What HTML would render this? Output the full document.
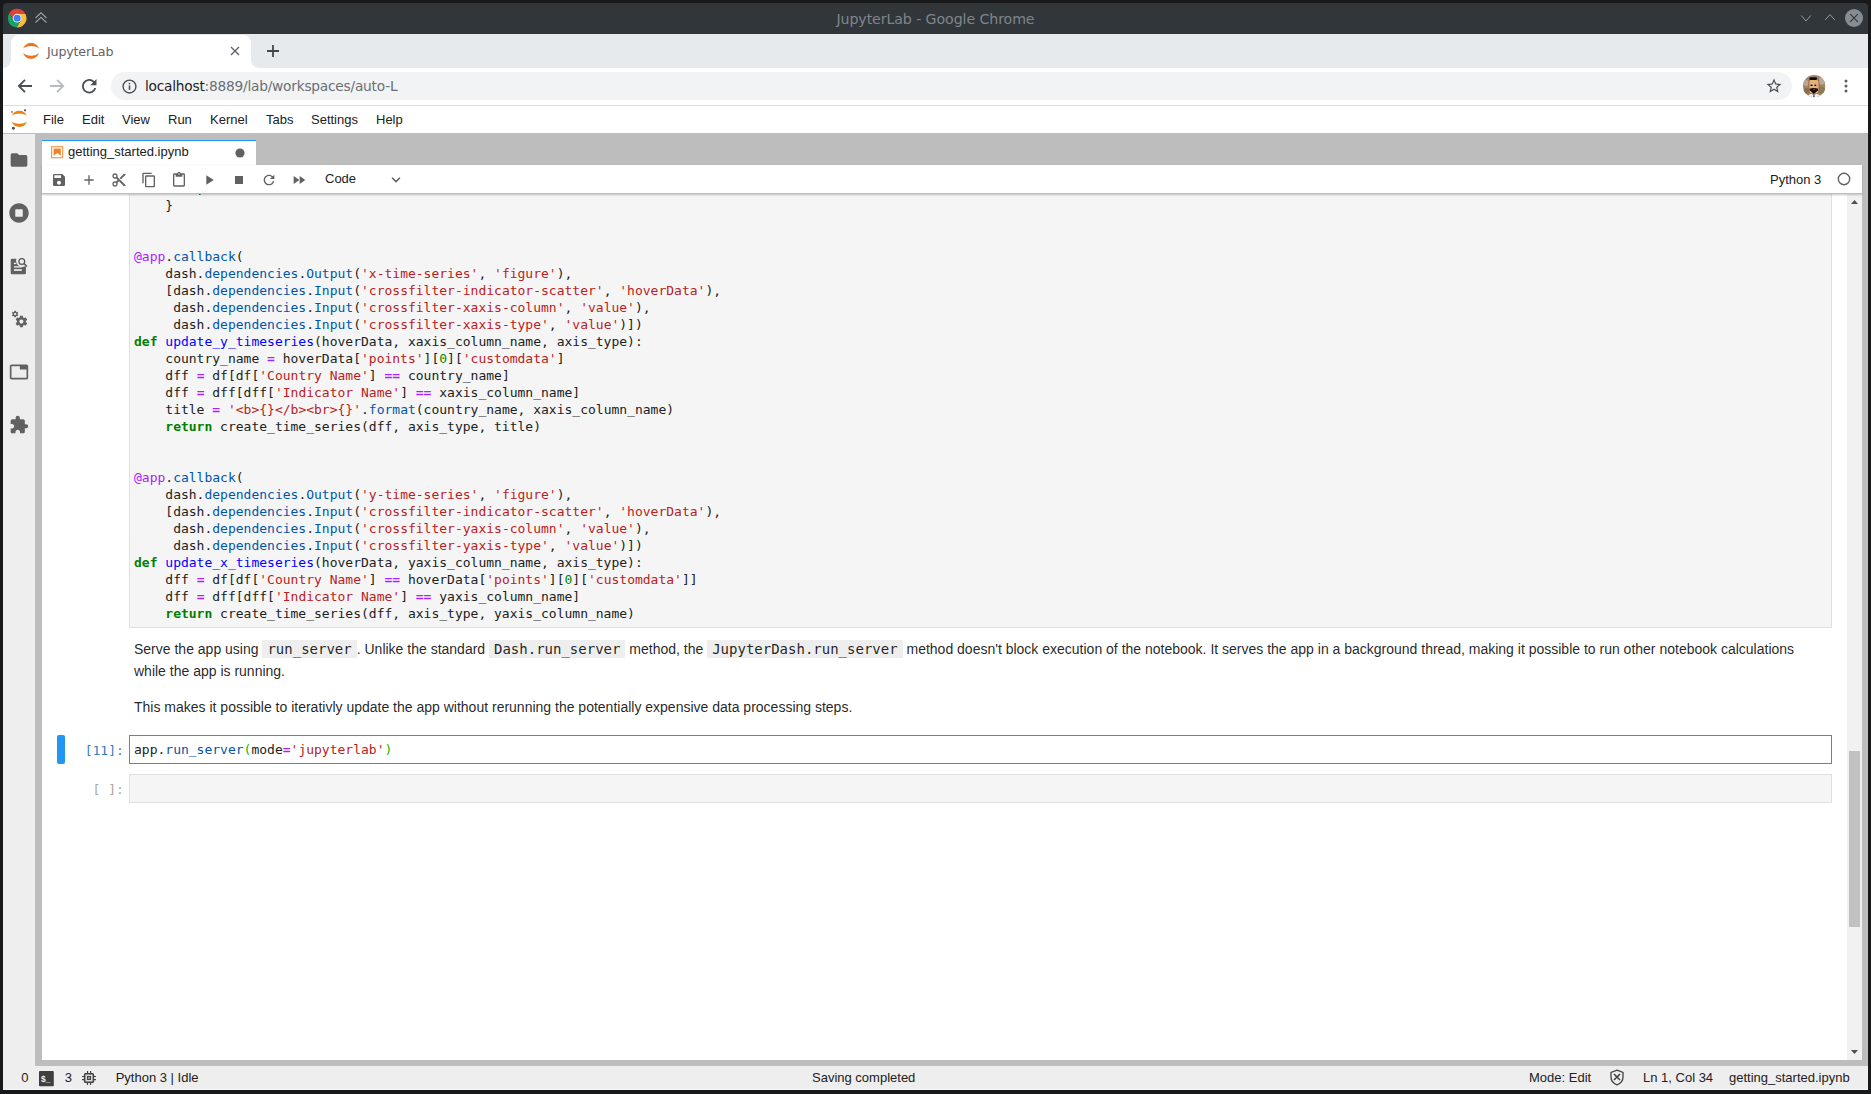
<!DOCTYPE html>
<html><head><meta charset="utf-8"><title>JupyterLab</title>
<style>
*{box-sizing:border-box}
html,body{margin:0;padding:0}
body{width:1871px;height:1094px;overflow:hidden;position:relative;background:#17191b;font-family:"Liberation Sans",Arial,sans-serif;}
.abs{position:absolute}
#titlebar{left:3px;top:3px;width:1865px;height:31px;background:#31363b;border-radius:4px 4px 0 0}
#title{left:0;width:1871px;top:9.500px;text-align:center;color:#80858a;font-family:"DejaVu Sans",sans-serif;font-size:14.200px;line-height:18px;letter-spacing:-0.1px}
#tabstrip{left:3px;top:34px;width:1865px;height:34px;background:#e7eaed}
#ctab{left:11px;top:35px;width:240px;height:33px;background:#fff;border-radius:8px 8px 0 0}
#ctabtxt{left:47px;top:42.500px;font-family:"DejaVu Sans",sans-serif;font-size:12.700px;line-height:18px;color:#5f6368;letter-spacing:-0.2px}
#navbar{left:3px;top:68px;width:1865px;height:38px;background:#fff;border-bottom:1px solid #dcdee1}
#omni{left:111px;top:72px;width:1681px;height:28px;border-radius:14px;background:#f1f3f4}
#url{left:145px;top:75.500px;font-family:"DejaVu Sans",sans-serif;font-size:13.730px;line-height:20px;color:#6b6f73;letter-spacing:-0.22px;white-space:nowrap}
#url b{font-weight:normal;color:#202124}
#menubar{left:3px;top:106px;width:1865px;height:28px;background:#fff;border-bottom:1px solid #bdbdbd}
.mi{top:112px;font-size:13px;line-height:16px;color:#212121;white-space:nowrap}
#sidebar{left:3px;top:134px;width:32px;height:932px;background:#eeeeee;border-right:0}
#dock{left:35px;top:134px;width:1833px;height:932px;background:#bdbdbd}
#jtab{left:42px;top:140px;width:214px;height:25px;background:#fff;border-top:1px solid #2196f3;}
#jtabtxt{left:68px;top:144px;font-size:13px;line-height:16px;color:#212121;white-space:nowrap}
#toolbar{left:42px;top:165px;width:1820px;height:29px;background:#fff;border-bottom:1px solid #bdbdbd;box-shadow:0 1px 2px 0 rgba(0,0,0,.22);z-index:5}
#nb{left:42px;top:193px;width:1820px;height:867px;background:#fff;overflow:hidden}
#statusbar{left:3px;top:1066px;width:1865px;height:24px;background:#eeeeee}
.st{top:1070px;font-size:13px;line-height:16px;color:#212121;white-space:nowrap}
.code{font-family:"DejaVu Sans Mono","Liberation Mono",monospace;font-size:13px;line-height:17px;white-space:pre;color:#212121}
.k{color:#008000;font-weight:bold}.d{color:#0000ff}.p{color:#0055aa}.s{color:#ba2121}.n{color:#008800}.o{color:#aa22ff;font-weight:bold}.m{color:#aa22ff}.br{color:#00bb00}
.md{font-size:14px;line-height:22px;color:rgba(0,0,0,.87);white-space:nowrap}
.md code{font-family:"DejaVu Sans Mono","Liberation Mono",monospace;font-size:14px;background:#eeeeee;padding:1px 5px;}
svg{position:absolute;overflow:visible}
</style></head><body>
<!-- ===== window title bar ===== -->
<div id="titlebar" class="abs"></div>
<div id="title" class="abs">JupyterLab - Google Chrome</div>
<svg style="left:6.950px;top:7.900px" width="20.300" height="20.300" viewBox="0 0 48 48">
 <path d="M24 14 L43.600 14 A22 22 0 0 0 5.540 12.030 L15.340 29 L24 24Z" fill="#db4437"/>
 <path d="M24 14 L43.600 14 A22 22 0 0 1 22.860 45.970 L32.660 29 L24 24Z" fill="#fbbc3a"/>
 <path d="M32.660 29 L22.860 45.970 A22 22 0 0 1 5.540 12.030 L15.340 29 L24 24Z" fill="#1aa260"/>
 <circle cx="24" cy="24" r="10.300" fill="#f1f1f1"/>
 <circle cx="24" cy="24" r="8.200" fill="#3d7ff5"/>
</svg>
<svg style="left:34px;top:10.700px" width="14" height="14" viewBox="0 0 14 14" fill="none" stroke="#9da1a5" stroke-width="1.1">
 <path d="M1.500 7 L7 1.800 L12.500 7"/><path d="M1.500 11.500 L7 6.300 L12.500 11.500"/>
</svg>
<svg style="left:1799px;top:13px" width="14" height="10" viewBox="0 0 14 10" fill="none" stroke="#979ba0" stroke-width="1"><path d="M2.100 2.400 L7 8 L11.900 2.400"/></svg>
<svg style="left:1823px;top:12px" width="14" height="10" viewBox="0 0 14 10" fill="none" stroke="#979ba0" stroke-width="1"><path d="M2.100 8 L7 2.600 L11.900 8"/></svg>
<svg style="left:1845px;top:9px" width="18" height="18" viewBox="0 0 18 18"><circle cx="9" cy="9" r="9" fill="#868c91"/><path d="M5.200 5.200 L12.800 12.800 M12.800 5.200 L5.200 12.800" stroke="#31363b" stroke-width="1.100" fill="none"/></svg>
<!-- ===== chrome tab strip ===== -->
<div id="tabstrip" class="abs"></div>
<div id="ctab" class="abs"></div>
<svg style="left:3px;top:60px" width="8" height="8" viewBox="0 0 8 8"><path d="M8 8 H0 A8 8 0 0 0 8 0 Z" fill="#fff"/></svg>
<svg style="left:251px;top:60px" width="8" height="8" viewBox="0 0 8 8"><path d="M0 8 H8 A8 8 0 0 1 0 0 Z" fill="#fff"/></svg>
<svg style="left:22px;top:42px" width="18" height="18" viewBox="0 0 18 18"><path d="M1.200 6.500 C3.400 -0.970 14.700 -0.970 16.900 6.500 C14 3.030 4.100 3.030 1.200 6.500 Z" fill="#e8751f"/><path d="M1.200 10.750 C3.400 18.800 14.700 18.800 16.900 10.750 C14 14.800 4.100 14.800 1.200 10.750 Z" fill="#e8751f"/></svg>
<div id="ctabtxt" class="abs">JupyterLab</div>
<svg style="left:230px;top:46px" width="10" height="10" viewBox="0 0 10 10" fill="none" stroke="#5f6368" stroke-width="1.400"><path d="M1 1 L9 9 M9 1 L1 9"/></svg>
<svg style="left:266px;top:44px" width="14" height="14" viewBox="0 0 14 14" fill="none" stroke="#44474a" stroke-width="1.800"><path d="M7 1 V13 M1 7 H13"/></svg>
<!-- ===== chrome nav bar ===== -->
<div id="navbar" class="abs"></div>
<div id="omni" class="abs"></div>
<svg style="left:17px;top:78px" width="16" height="16" viewBox="0 0 16 16" fill="none" stroke="#4b4e52" stroke-width="1.800"><path d="M15 8 H2 M8 1.800 L1.800 8 L8 14.200"/></svg>
<svg style="left:49px;top:78px" width="16" height="16" viewBox="0 0 16 16" fill="none" stroke="#b9bcbf" stroke-width="1.800"><path d="M1 8 H14 M8 1.800 L14.200 8 L8 14.200"/></svg>
<svg style="left:81.900px;top:79px" width="14.500" height="14.500" viewBox="0 0 16 16"><path d="M13.650 2.350 A8 8 0 1 0 15.730 10 H13.650 A6 6 0 1 1 12.230 3.770 L9 7 H16 V0 Z" fill="#4b4e52"/></svg>
<svg style="left:121.600px;top:78.800px" width="15" height="15" viewBox="0 0 14 14"><circle cx="7" cy="7" r="6" fill="none" stroke="#4b4e52" stroke-width="1.300"/><rect x="6.300" y="6" width="1.400" height="4.200" fill="#4b4e52"/><rect x="6.300" y="3.600" width="1.400" height="1.400" fill="#4b4e52"/></svg>
<div id="url" class="abs"><b>localhost</b>:8889/lab/workspaces/auto-L</div>
<svg style="left:1765px;top:77px" width="18" height="18" viewBox="0 0 24 24"><path d="M22 9.240l-7.190-.62L12 2 9.190 8.630 2 9.240l5.460 4.730L5.820 21 12 17.270 18.180 21l-1.630-7.030L22 9.240zM12 15.400l-3.760 2.270 1-4.280-3.320-2.880 4.380-.38L12 6.100l1.710 4.040 4.380.38-3.320 2.880 1 4.280L12 15.400z" fill="#4b4e52"/></svg>
<svg style="left:1802.700px;top:74.800px" width="22.400" height="22.400" viewBox="0 0 22.400 22.400">
 <defs><clipPath id="av"><circle cx="11.200" cy="11.200" r="11.200"/></clipPath></defs>
 <g clip-path="url(#av)"><rect width="22.400" height="22.400" fill="#a08468"/>
 <circle cx="3" cy="8" r="3" fill="#b8a794"/><circle cx="19" cy="6" r="3.500" fill="#b9ab9c"/><circle cx="18.500" cy="15" r="3.500" fill="#8e7a55"/><circle cx="3.500" cy="16" r="3" fill="#8a6f4e"/>
 <rect x="5.400" y="3" width="11" height="16" rx="4" fill="#9a6a42"/>
 <rect x="6.300" y="4" width="9.200" height="14.600" rx="3.600" fill="#e2b07a"/>
 <rect x="6.400" y="2.200" width="7.600" height="2.700" rx="1.200" fill="#0f0a08"/>
 <ellipse cx="8.500" cy="10.250" rx="1.300" ry="0.800" fill="#120c0a"/><ellipse cx="12.300" cy="10.250" rx="1.100" ry="0.800" fill="#120c0a"/>
 <path d="M6.500 13.800 Q10.850 12.300 15.200 13.800 L15 15.300 L10.850 18.900 L6.700 15.300 Z" fill="#160c08"/>
 <ellipse cx="11" cy="14.600" rx="1.300" ry="0.550" fill="#c2281c"/>
 <path d="M4.500 22.400 Q5 19.500 8.500 18.800 L10.850 20.500 L13.200 18.800 Q17 19.500 17.800 22.400 Z" fill="#f0eff0"/>
 <rect x="10.300" y="20.300" width="1.200" height="1.700" fill="#222"/>
 </g>
</svg>
<svg style="left:1844.400px;top:78.400px" width="4" height="16" viewBox="0 0 4 16" fill="#5a5d62"><circle cx="2" cy="3" r="1.500"/><circle cx="2" cy="8" r="1.500"/><circle cx="2" cy="13" r="1.500"/></svg>
<!-- ===== jupyterlab menu bar ===== -->
<div id="menubar" class="abs"></div>
<svg style="left:9px;top:108px" width="20" height="22" viewBox="0 0 20 22">
 <path d="M2.900 7.700 C5 1 15.700 1 17.800 7.700 C15 5.200 5.700 5.200 2.900 7.700 Z" fill="#f08010"/>
 <path d="M2.900 13.800 C5 20.700 15.700 20.700 17.800 13.800 C15 16.400 5.700 16.400 2.900 13.800 Z" fill="#f08010"/>
 <circle cx="16.060" cy="2.300" r="1.150" fill="#555"/><circle cx="3" cy="3.900" r="0.850" fill="#666"/><circle cx="4.400" cy="20.300" r="1.450" fill="#505050"/>
</svg>
<div class="abs mi" style="left:43px">File</div>
<div class="abs mi" style="left:82px">Edit</div>
<div class="abs mi" style="left:122px">View</div>
<div class="abs mi" style="left:168px">Run</div>
<div class="abs mi" style="left:210px">Kernel</div>
<div class="abs mi" style="left:266px">Tabs</div>
<div class="abs mi" style="left:311px">Settings</div>
<div class="abs mi" style="left:376px">Help</div>
<!-- ===== side bar + dock ===== -->
<div id="dock" class="abs"></div>
<div id="sidebar" class="abs"></div>
<svg style="left:9px;top:150px" width="20" height="20" viewBox="0 0 24 24"><path fill="#616161" d="M10 4H4c-1.100 0-1.990.9-1.990 2L2 18c0 1.100.9 2 2 2h16c1.100 0 2-.9 2-2V8c0-1.100-.9-2-2-2h-8l-2-2z"/></svg>
<svg style="left:9px;top:203px" width="20" height="20" viewBox="0 0 512 512"><path fill="#616161" d="M256 8C119 8 8 119 8 256s111 248 248 248 248-111 248-248S393 8 256 8zm96 328c0 8.800-7.200 16-16 16H176c-8.800 0-16-7.200-16-16V176c0-8.800 7.200-16 16-16h160c8.800 0 16 7.200 16 16v160z"/></svg>
<svg style="left:9px;top:256px" width="20" height="20" viewBox="0 0 20 20">
 <rect x="1.700" y="2.800" width="15.200" height="15.500" rx="1.300" fill="#616161"/>
 <circle cx="13.300" cy="4.600" r="6.300" fill="#eeeeee"/>
 <rect x="4.900" y="6.800" width="2.300" height="1.300" fill="#eeeeee"/>
 <rect x="4.900" y="10.200" width="7.900" height="1.350" fill="#eeeeee"/>
 <rect x="4.900" y="13.200" width="7.900" height="1.700" fill="#eeeeee"/>
 <circle cx="12.800" cy="5.400" r="2.900" fill="none" stroke="#555" stroke-width="1.250"/>
 <path d="M15 7.600 L17.900 10.500" stroke="#555" stroke-width="1.400" fill="none"/>
</svg>
<svg style="left:9px;top:309px" width="20" height="20" viewBox="0 0 24 24" fill="#616161">
 <path d="M14.900 17.450C16.250 17.450 17.350 16.350 17.350 15C17.350 13.650 16.250 12.550 14.900 12.550C13.540 12.550 12.450 13.650 12.450 15C12.450 16.350 13.540 17.450 14.900 17.450ZM20.100 15.680L21.580 16.840C21.710 16.950 21.750 17.130 21.660 17.290L20.260 19.710C20.170 19.860 20 19.920 19.830 19.860L18.090 19.160C17.730 19.440 17.330 19.670 16.910 19.850L16.640 21.700C16.620 21.870 16.470 22 16.300 22H13.500C13.320 22 13.180 21.870 13.150 21.700L12.890 19.850C12.460 19.670 12.070 19.440 11.710 19.160L9.960 19.860C9.810 19.920 9.620 19.860 9.540 19.710L8.140 17.290C8.050 17.130 8.090 16.950 8.220 16.840L9.700 15.680L9.650 15L9.700 14.310L8.220 13.160C8.090 13.050 8.050 12.860 8.140 12.710L9.540 10.290C9.620 10.130 9.810 10.070 9.960 10.130L11.710 10.840C12.070 10.560 12.460 10.320 12.890 10.150L13.150 8.289C13.180 8.130 13.320 8 13.500 8H16.300C16.470 8 16.620 8.130 16.640 8.289L16.910 10.150C17.330 10.320 17.730 10.560 18.090 10.840L19.830 10.130C20 10.070 20.170 10.130 20.260 10.290L21.660 12.710C21.750 12.860 21.710 13.050 21.580 13.160L20.100 14.310L20.150 15L20.100 15.680Z"/>
 <path d="M7.330 7.445C8.083 7.445 8.694 6.834 8.694 6.081C8.694 5.328 8.083 4.717 7.330 4.717C6.576 4.717 5.966 5.328 5.966 6.081C5.966 6.834 6.576 7.445 7.330 7.445ZM10.220 6.460L11.050 7.107C11.120 7.166 11.140 7.271 11.090 7.355L10.310 8.705C10.260 8.790 10.160 8.820 10.070 8.790L9.100 8.398C8.900 8.553 8.680 8.685 8.440 8.781L8.290 9.816C8.280 9.909 8.200 9.979 8.110 9.979H6.550C6.450 9.979 6.370 9.909 6.350 9.816L6.210 8.781C5.970 8.685 5.750 8.557 5.550 8.398L4.580 8.790C4.490 8.824 4.390 8.790 4.340 8.705L3.560 7.355C3.510 7.271 3.530 7.166 3.610 7.107L4.430 6.460L4.400 6.081L4.430 5.701L3.610 5.054C3.530 4.995 3.510 4.890 3.560 4.806L4.340 3.456C4.390 3.371 4.490 3.341 4.580 3.371L5.550 3.763C5.750 3.608 5.970 3.476 6.210 3.380L6.350 2.345C6.370 2.252 6.450 2.182 6.550 2.182H8.110C8.200 2.182 8.280 2.252 8.290 2.345L8.440 3.380C8.680 3.476 8.900 3.604 9.100 3.763L10.070 3.371C10.160 3.337 10.260 3.371 10.310 3.456L11.090 4.806C11.140 4.890 11.120 4.995 11.050 5.054L10.220 5.701L10.250 6.081L10.220 6.460Z"/>
</svg>
<svg style="left:9px;top:362px" width="20" height="20" viewBox="0 0 24 24"><path fill="#616161" d="M21 3H3c-1.100 0-2 .9-2 2v14c0 1.100.9 2 2 2h18c1.100 0 2-.9 2-2V5c0-1.100-.9-2-2-2zm0 16H3V5h10v4h8v10z"/></svg>
<svg style="left:9px;top:415px" width="20" height="20" viewBox="0 0 24 24"><path fill="#616161" d="M20.500 11H19V7c0-1.100-.9-2-2-2h-4V3.500C13 2.120 11.880 1 10.500 1S8 2.120 8 3.500V5H4c-1.100 0-1.990.9-1.990 2v3.800H3.500c1.490 0 2.700 1.210 2.700 2.700s-1.210 2.700-2.700 2.700H2V20c0 1.100.9 2 2 2h3.800v-1.500c0-1.490 1.210-2.700 2.700-2.700 1.490 0 2.700 1.210 2.700 2.700V22H17c1.100 0 2-.9 2-2v-4h1.500c1.380 0 2.500-1.120 2.500-2.500S21.880 11 20.500 11z"/></svg>
<!-- ===== dock tab ===== -->
<div id="jtab" class="abs"></div>
<svg style="left:49.800px;top:144.900px" width="14.400" height="14.400" viewBox="0 0 22 22" fill="#f1842a"><path d="M18.700 3.300v15.400H3.300V3.300h15.400m1.500-1.500H1.800v18.300h18.300l.1-18.300z"/><path d="M16.500 16.500l-5.400-4.300-5.600 4.300v-11h11z"/></svg>
<div id="jtabtxt" class="abs">getting_started.ipynb</div>
<svg style="left:235px;top:148px" width="10" height="10" viewBox="0 0 10 10"><circle cx="5" cy="5" r="4.600" fill="#616161"/></svg>
<!-- ===== notebook toolbar ===== -->
<div id="toolbar" class="abs"></div>

<svg style="left:51px;top:172px;z-index:6" width="16" height="16" viewBox="0 0 24 24"><path fill="#616161" d="M17 3H5c-1.110 0-2 .9-2 2v14c0 1.100.89 2 2 2h14c1.100 0 2-.9 2-2V7l-4-4zm-5 16c-1.660 0-3-1.340-3-3s1.340-3 3-3 3 1.340 3 3-1.340 3-3 3zm3-10H5V5h10v4z"/></svg>
<svg style="left:81px;top:172px;z-index:6" width="16" height="16" viewBox="0 0 24 24"><path fill="#616161" d="M19 13h-6v6h-2v-6H5v-2h6V5h2v6h6v2z"/></svg>
<svg style="left:111px;top:172px;z-index:6" width="16" height="16" viewBox="0 0 24 24"><path fill="#616161" d="M9.640 7.640c.23-.5.360-1.050.360-1.640 0-2.210-1.790-4-4-4S2 3.790 2 6s1.790 4 4 4c.59 0 1.140-.13 1.640-.36L10 12l-2.360 2.360C7.140 14.130 6.590 14 6 14c-2.210 0-4 1.790-4 4s1.790 4 4 4 4-1.790 4-4c0-.59-.13-1.140-.36-1.640L12 14l7 7h3v-1L9.640 7.640zM6 8c-1.100 0-2-.89-2-2s.9-2 2-2 2 .89 2 2-.9 2-2 2zm0 12c-1.100 0-2-.89-2-2s.9-2 2-2 2 .89 2 2-.9 2-2 2zm6-7.500c-.28 0-.5-.22-.5-.5s.22-.5.5-.5.500.22.500.500-.22.500-.5.500zM19 3l-6 6 2 2 7-7V3z"/></svg>
<svg style="left:141px;top:172px;z-index:6" width="16" height="16" viewBox="0 0 24 24"><path fill="#616161" d="M16 1H4c-1.100 0-2 .9-2 2v14h2V3h12V1zm3 4H8c-1.100 0-2 .9-2 2v14c0 1.100.9 2 2 2h11c1.100 0 2-.9 2-2V7c0-1.100-.9-2-2-2zm0 16H8V7h11v14z"/></svg>
<svg style="left:171px;top:172px;z-index:6" width="16" height="16" viewBox="0 0 24 24"><path fill="#616161" d="M19 2h-4.180C14.400.84 13.300 0 12 0c-1.300 0-2.400.84-2.820 2H5c-1.100 0-2 .9-2 2v16c0 1.100.9 2 2 2h14c1.100 0 2-.9 2-2V4c0-1.100-.9-2-2-2zm-7 0c.55 0 1 .45 1 1s-.45 1-1 1-1-.45-1-1 .45-1 1-1zm7 18H5V4h2v3h10V4h2v16z"/></svg>
<svg style="left:201px;top:172px;z-index:6" width="16" height="16" viewBox="0 0 24 24"><path fill="#616161" d="M8 5v14l11-7z"/></svg>
<svg style="left:231px;top:172px;z-index:6" width="16" height="16" viewBox="0 0 24 24"><path fill="#616161" d="M6 6h12v12H6z"/></svg>
<svg style="left:261px;top:172px;z-index:6" width="16" height="16" viewBox="0 0 18 18"><path fill="#616161" d="M9 13.500c-2.490 0-4.500-2.010-4.500-4.500S6.510 4.500 9 4.500c1.240 0 2.360.52 3.170 1.330L10 8h5V3l-1.760 1.760C12.150 3.680 10.660 3 9 3 5.690 3 3.010 5.690 3.010 9S5.690 15 9 15c2.970 0 5.430-2.160 5.900-5h-1.520c-.46 2-2.240 3.500-4.380 3.500z"/></svg>
<svg style="left:291px;top:172px;z-index:6" width="16" height="16" viewBox="0 0 24 24"><path fill="#616161" d="M4 18l8.500-6L4 6v12zm9-12v12l8.500-6L13 6z"/></svg>
<div class="abs" style="left:325px;top:171px;z-index:6;font-size:13px;line-height:16px;color:#212121">Code</div>
<svg style="left:388px;top:172px;z-index:6" width="16" height="16" viewBox="0 0 18 18"><path fill="#616161" d="M5.200 5.900L9 9.700l3.800-3.800 1.200 1.200-5 5-5-5z"/></svg>
<div class="abs" style="left:1770px;top:172px;z-index:6;font-size:13px;line-height:16px;color:#212121;white-space:nowrap">Python 3</div>
<svg style="left:1837px;top:172px;z-index:6" width="14" height="14" viewBox="0 0 14 14"><circle cx="7" cy="7" r="5.700" fill="none" stroke="#616161" stroke-width="1.400"/></svg>
<!-- ===== notebook area ===== -->
<div id="nb" class="abs">
 <!-- coordinates inside are relative to (42,193) -->
 <div class="abs" style="left:87px;top:-60px;width:1703px;height:495px;background:#f5f5f5;border:1px solid #e0e0e0"></div>
 <pre class="abs code" style="left:92px;top:-13px;margin:0">        ,
    }


<span class="m">@app</span>.<span class="p">callback</span>(
    dash.<span class="p">dependencies</span>.<span class="p">Output</span>(<span class="s">'x-time-series'</span>, <span class="s">'figure'</span>),
    [dash.<span class="p">dependencies</span>.<span class="p">Input</span>(<span class="s">'crossfilter-indicator-scatter'</span>, <span class="s">'hoverData'</span>),
     dash.<span class="p">dependencies</span>.<span class="p">Input</span>(<span class="s">'crossfilter-xaxis-column'</span>, <span class="s">'value'</span>),
     dash.<span class="p">dependencies</span>.<span class="p">Input</span>(<span class="s">'crossfilter-xaxis-type'</span>, <span class="s">'value'</span>)])
<span class="k">def</span> <span class="d">update_y_timeseries</span>(hoverData, xaxis_column_name, axis_type):
    country_name <span class="o">=</span> hoverData[<span class="s">'points'</span>][<span class="n">0</span>][<span class="s">'customdata'</span>]
    dff <span class="o">=</span> df[df[<span class="s">'Country Name'</span>] <span class="o">==</span> country_name]
    dff <span class="o">=</span> dff[dff[<span class="s">'Indicator Name'</span>] <span class="o">==</span> xaxis_column_name]
    title <span class="o">=</span> <span class="s">'&lt;b&gt;{}&lt;/b&gt;&lt;br&gt;{}'</span>.<span class="p">format</span>(country_name, xaxis_column_name)
    <span class="k">return</span> create_time_series(dff, axis_type, title)


<span class="m">@app</span>.<span class="p">callback</span>(
    dash.<span class="p">dependencies</span>.<span class="p">Output</span>(<span class="s">'y-time-series'</span>, <span class="s">'figure'</span>),
    [dash.<span class="p">dependencies</span>.<span class="p">Input</span>(<span class="s">'crossfilter-indicator-scatter'</span>, <span class="s">'hoverData'</span>),
     dash.<span class="p">dependencies</span>.<span class="p">Input</span>(<span class="s">'crossfilter-yaxis-column'</span>, <span class="s">'value'</span>),
     dash.<span class="p">dependencies</span>.<span class="p">Input</span>(<span class="s">'crossfilter-yaxis-type'</span>, <span class="s">'value'</span>)])
<span class="k">def</span> <span class="d">update_x_timeseries</span>(hoverData, yaxis_column_name, axis_type):
    dff <span class="o">=</span> df[df[<span class="s">'Country Name'</span>] <span class="o">==</span> hoverData[<span class="s">'points'</span>][<span class="n">0</span>][<span class="s">'customdata'</span>]]
    dff <span class="o">=</span> dff[dff[<span class="s">'Indicator Name'</span>] <span class="o">==</span> yaxis_column_name]
    <span class="k">return</span> create_time_series(dff, axis_type, yaxis_column_name)</pre>
 <div class="abs md" style="left:92px;top:445px">Serve the app using <code>run_server</code>. Unlike the standard <code>Dash.run_server</code> method, the <code>JupyterDash.run_server</code> method doesn't block execution of the notebook. It serves the app in a background thread, making it possible to run other notebook calculations<br>while the app is running.</div>
 <div class="abs md" style="left:92px;top:503px">This makes it possible to iterativly update the app without rerunning the potentially expensive data processing steps.</div>
 <div class="abs" style="left:15px;top:542px;width:8px;height:29px;background:#2196f3;border-radius:2px"></div>
 <div class="abs code" style="left:24.800px;top:548.500px;width:57px;text-align:right;color:#307fc1">[11]:</div>
 <div class="abs" style="left:87px;top:542px;width:1703px;height:29px;background:#fff;border:1px solid #2196f3"></div>
 <pre class="abs code" style="left:92px;top:548px;margin:0">app.<span class="p">run_server</span><span class="br">(</span>mode<span class="o">=</span><span class="s">'jupyterlab'</span><span class="br">)</span></pre>
 <div class="abs code" style="left:24.800px;top:587.500px;width:57px;text-align:right;color:#a6a6a6">[ ]:</div>
 <div class="abs" style="left:87px;top:581px;width:1703px;height:29px;background:#f5f5f5;border:1px solid #e0e0e0"></div>
 <!-- scrollbar -->
 <div class="abs" style="left:1805px;top:0;width:15px;height:867px;background:#f1f1f1"></div>
 <div class="abs" style="left:1807px;top:558px;width:11px;height:176px;background:#c1c1c1"></div>
 <svg style="left:1809px;top:7px" width="7" height="4" viewBox="0 0 7 4"><path d="M0 4 L3.500 0 L7 4Z" fill="#505050"/></svg>
 <svg style="left:1809px;top:857px" width="7" height="4" viewBox="0 0 7 4"><path d="M0 0 L3.500 4 L7 0Z" fill="#505050"/></svg>
</div>
<!-- ===== status bar ===== -->
<div id="statusbar" class="abs"></div>
<div class="abs" style="left:3px;top:1089px;width:1865px;height:1px;background:#fbfbfb"></div>
<div class="abs st" style="left:21.300px">0</div>
<svg style="left:39.200px;top:1071.300px" width="15" height="15.300" viewBox="0 0 15 15.300"><rect x="0" y="0" width="14.800" height="15.300" rx="1" fill="#3e3e3e"/><text x="1.900" y="11.200" font-family="Liberation Sans, sans-serif" font-size="9.500" font-weight="bold" fill="#f2f2f2" textLength="9.500" lengthAdjust="spacingAndGlyphs">$_</text></svg>
<div class="abs st" style="left:64.700px">3</div>
<svg style="left:81px;top:1070px" width="16" height="16" viewBox="0 0 16 16" fill="none" stroke="#424242">
 <path d="M6.500 1V3.200M9.600 1V3.200M6.500 12.800V15M9.600 12.800V15M1 6.500H3.200M1 9.600H3.200M12.800 6.500H15M12.800 9.600H15" stroke-width="1.200"/>
 <rect x="3.650" y="3.650" width="8.700" height="8.700" rx="0.800" stroke-width="1.500" fill="#dadada"/><rect x="6.600" y="6.600" width="2.800" height="2.800" stroke-width="1.200" fill="#cfcfcf"/>
</svg>
<div class="abs st" style="left:115.700px">Python 3 | Idle</div>
<div class="abs st" style="left:812px">Saving completed</div>
<div class="abs st" style="left:1529px">Mode: Edit</div>
<svg style="left:1609px;top:1069px" width="16" height="17" viewBox="0 0 16 17" fill="none" stroke="#424242" stroke-width="1.300">
 <path d="M8 1.200 L14 3.400 V8 C14 11.800 11.500 14.600 8 15.800 C4.500 14.600 2 11.800 2 8 V3.400 Z"/>
 <path d="M5 5 L11 11 M11 5 L5 11" stroke-width="1.600"/>
</svg>
<div class="abs st" style="left:1643px">Ln 1, Col 34</div>
<div class="abs st" style="left:1729px">getting_started.ipynb</div>
</body></html>
